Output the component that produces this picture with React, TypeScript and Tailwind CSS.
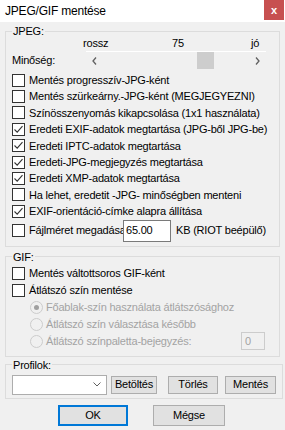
import React from "react";

const font = { fontFamily: '"Liberation Sans", Arial, sans-serif' };

function Check({ checked }: { checked?: boolean }) {
  return (
    <span className="w-[13px] h-[13px] border border-[#333333] bg-white shrink-0 flex items-center justify-center">
      {checked && (
        <svg width="11" height="11" viewBox="0 0 11 11">
          <path d="M1.5 5.5 L4.2 8.2 L9.5 2.2" fill="none" stroke="#333" strokeWidth="1.1" />
        </svg>
      )}
    </span>
  );
}

function CheckRow({ label, checked }: { label: string; checked?: boolean }) {
  return (
    <div className="h-[16.4px] flex items-center gap-[4px]">
      <Check checked={checked} />
      <span className="whitespace-nowrap">{label}</span>
    </div>
  );
}

function Radio({ label, selected, children }: { label: string; selected?: boolean; children?: React.ReactNode }) {
  return (
    <div className="h-[17px] flex items-center pl-[18px] gap-[3px] text-[#a3a3a3]">
      <span className="w-[13px] h-[13px] rounded-full border border-[#cccccc] bg-[#f0f0f0] flex items-center justify-center shrink-0">
        {selected && <span className="w-[5px] h-[5px] rounded-full bg-[#a0a0a0]" />}
      </span>
      <span className="whitespace-nowrap flex-1">{label}</span>
      {children}
    </div>
  );
}

function Btn({ label, w }: { label: string; w: string }) {
  return (
    <button className={`${w} h-[18px] bg-[#e1e1e1] border border-[#adadad] flex items-center justify-center`}>
      {label}
    </button>
  );
}

export default function App() {
  const jpegRows: [string, boolean][] = [
    ["Mentés progresszív-JPG-ként", false],
    ["Mentés szürkeárny.-JPG-ként (MEGJEGYEZNI)", false],
    ["Színösszenyomás kikapcsolása (1x1 használata)", false],
    ["Eredeti EXIF-adatok megtartása (JPG-ből JPG-be)", true],
    ["Eredeti IPTC-adatok megtartása", true],
    ["Eredeti-JPG-megjegyzés megtartása", true],
    ["Eredeti XMP-adatok megtartása", true],
    ["Ha lehet, eredetit -JPG- minőségben menteni", false],
    ["EXIF-orientáció-címke alapra állítása", true],
  ];

  return (
    <div className="w-[285px] h-[430px] bg-[#f0f0f0] text-[11px] tracking-[-0.2px] text-black overflow-hidden" style={font}>
      {/* title bar */}
      <div className="h-[22px] bg-white flex justify-between">
        <span className="pl-[5px] pt-[4px] text-[12px] leading-[14px]">JPEG/GIF mentése</span>
        <span className="w-[20px] h-[20px] mr-[1px] bg-[#c75050] text-white flex items-center justify-center text-[11px] font-bold">x</span>
      </div>

      <div className="px-[5px]">
        {/* JPEG */}
        <fieldset className="mt-[3px] border border-[#dcdcdc] px-[6px] pb-[4px]">
          <legend className="px-[1px] leading-[12px]">JPEG:</legend>
          <div className="flex flex-col">
            <div className="h-[12px] flex items-center ml-[71px]">
              <span className="w-[89px]">rossz</span>
              <span className="w-[79px]">75</span>
              <span>jó</span>
            </div>
            <div className="flex items-center mt-[2px]">
              <span className="w-[74px]">Minőség:</span>
              <div className="flex-1 flex flex-col mr-[7px]">
                <div className="h-px bg-white" />
                <div className="h-[17px] flex items-center">
                  <span className="w-[17px] flex justify-center">
                    <svg width="5" height="8" viewBox="0 0 5 8"><path d="M4 0.5 L1 4 L4 7.5" fill="none" stroke="#606060" strokeWidth="1.3" /></svg>
                  </span>
                  <span className="flex-1 flex pl-[94px]">
                    <span className="w-[17px] h-[17px] bg-[#cdcdcd]" />
                  </span>
                  <span className="w-[17px] flex justify-center">
                    <svg width="5" height="8" viewBox="0 0 5 8"><path d="M1 0.5 L4 4 L1 7.5" fill="none" stroke="#606060" strokeWidth="1.3" /></svg>
                  </span>
                </div>
              </div>
            </div>
            <div className="mt-[3px] flex flex-col">
              {jpegRows.map(([l, c]) => (
                <CheckRow key={l} label={l} checked={c} />
              ))}
            </div>
            <div className="h-[22px] flex items-center">
              <Check />
              <span className="w-[94px] ml-[4px] overflow-hidden whitespace-nowrap">Fájlméret megadása</span>
              <span className="w-[48px] h-[22px] bg-white border border-[#7a7a7a] flex items-center pl-[2px]">65.00</span>
              <span className="ml-[5px] whitespace-nowrap">KB (RIOT beépülő)</span>
            </div>
          </div>
        </fieldset>

        {/* GIF */}
        <fieldset className="mt-[4px] border border-[#dcdcdc] px-[6px] pt-[2px] pb-[6px]">
          <legend className="px-[1px] leading-[12px]">GIF:</legend>
          <div className="h-[17px] flex items-center gap-[4px]"><Check /><span>Mentés váltottsoros GIF-ként</span></div>
          <div className="h-[17px] flex items-center gap-[4px]"><Check /><span>Átlátszó szín mentése</span></div>
          <Radio label="Főablak-szín használata átlátszósághoz" selected />
          <Radio label="Átlátszó szín választása később" />
          <Radio label="Átlátszó színpaletta-bejegyzés:">
            <span className="w-[24px] h-[18px] mr-[8px] border border-[#cccccc] bg-[#f0f0f0] flex items-center pl-[3px]">0</span>
          </Radio>
        </fieldset>

        {/* Profilok */}
        <fieldset className="mt-[2px] border border-[#dcdcdc] px-[6px] pt-[4px] pb-[3px]">
          <legend className="px-[1px] leading-[12px]">Profilok:</legend>
          <div className="h-[20px] flex items-center">
            <div className="w-[95px] h-[20px] bg-white border border-[#adadad] flex items-center justify-end pr-[5px]">
              <svg width="8" height="5" viewBox="0 0 8 5"><path d="M0.5 0.5 L4 4 L7.5 0.5" fill="none" stroke="#606060" strokeWidth="1" /></svg>
            </div>
            <span className="ml-[4px]"><Btn label="Betöltés" w="w-[46px]" /></span>
            <span className="ml-[11px]"><Btn label="Törlés" w="w-[50px]" /></span>
            <span className="ml-[7px]"><Btn label="Mentés" w="w-[51px]" /></span>
          </div>
        </fieldset>

        <div className="mt-[6px] flex">
          <button className="ml-[53px] w-[70px] h-[21px] bg-[#e1e1e1] border-2 border-[#0078d7] flex items-center justify-center">OK</button>
          <button className="ml-[25px] w-[72px] h-[21px] bg-[#e1e1e1] border border-[#adadad] flex items-center justify-center">Mégse</button>
        </div>
      </div>
    </div>
  );
}
